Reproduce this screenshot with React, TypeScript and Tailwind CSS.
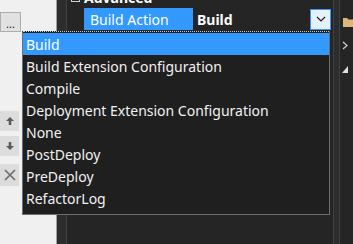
const options = [
  "Build",
  "Build Extension Configuration",
  "Compile",
  "Deployment Extension Configuration",
  "None",
  "PostDeploy",
  "PreDeploy",
  "RefactorLog",
]

function SideButton({ children, className = "" }: { children: React.ReactNode; className?: string }) {
  return (
    <div className={"w-[19px] h-[20px] bg-[#dcdcdc] flex items-center justify-center text-[#555] " + className}>
      {children}
    </div>
  )
}

export default function App() {
  return (
    <main
      className="relative w-[353px] h-[244px] overflow-hidden flex bg-[#252526] text-[14px]"
      style={{ fontFamily: '"Noto Sans", "Open Sans", sans-serif' }}
    >
      {/* left light panel */}
      <div className="w-[57px] h-full bg-[#f0f0f0] border-r border-[#a0a0a0] flex flex-col">
        <div className="mt-[12px] w-[21px] h-[20px] bg-[#e1e1e1] border border-[#adadad] flex items-end justify-center pb-[2px] text-[#222] text-[11px] leading-none">
          ...
        </div>
        <div className="mt-[79px] flex flex-col gap-[5px]">
          <SideButton>
            <svg width="10" height="10" viewBox="0 0 10 10">
              <path d="M5 1 L9 5 H6.3 V9 H3.7 V5 H1 Z" fill="#5a5a5a" />
            </svg>
          </SideButton>
          <SideButton>
            <svg width="10" height="10" viewBox="0 0 10 10">
              <path d="M5 9 L9 5 H6.3 V1 H3.7 V5 H1 Z" fill="#5a5a5a" />
            </svg>
          </SideButton>
          <SideButton className="mt-[3px] h-[22px]">
            <svg width="14" height="14" viewBox="0 0 14 14">
              <path d="M2 2 L12 12 M12 2 L2 12" stroke="#6a6a6a" strokeWidth="1.6" />
            </svg>
          </SideButton>
        </div>
      </div>

      {/* property grid */}
      <div className="flex-1 flex">
        <div className="w-[9px] bg-[#2d2d30]" />
        <div className="w-px bg-[#3f3f46]" />
        <div className="flex-1 flex flex-col -mt-[14px]">
          <div className="h-[22px] flex items-center text-white font-bold">
            <div className="w-[17px] flex justify-center">
              <span className="w-[9px] h-[9px] border border-[#d0d0d0] flex items-center justify-center">
                <span className="w-[5px] h-px bg-[#d0d0d0]" />
              </span>
            </div>
            <span>Advanced</span>
          </div>
          <div className="h-[22px] flex items-center">
            <div className="w-[17px]" />
            <div className="w-[109px] h-full bg-[#3399ff] text-white flex items-center pl-[6px]">Build Action</div>
            <div className="flex-1 h-full flex items-center pl-[4px] text-white font-bold">Build</div>
            <div className="w-[21px] h-[21px] bg-[#e5f1fb] border border-[#3399ff] flex items-center justify-center">
              <svg width="10" height="6" viewBox="0 0 10 6">
                <path d="M1 1 L5 5 L9 1" stroke="#1e1e1e" strokeWidth="1.2" fill="none" />
              </svg>
            </div>
          </div>
        </div>
        <div className="w-[2px] bg-[#252526]" />
        <div className="w-px bg-[#3f3f46]" />
      </div>

      {/* right strip */}
      <div className="w-[6px] bg-[#2d2d30] border-r border-[#3f3f46]" />
      <div className="w-[13px] flex flex-col items-start pl-[2px]">
        <svg width="14" height="12" viewBox="0 0 14 12" className="mt-[16px]">
          <path d="M1 2 H5 L6.5 3.5 H13 V11 H1 Z" fill="#dcb67a" />
        </svg>
        <svg width="6" height="9" viewBox="0 0 6 9" className="mt-[13px]">
          <path d="M1 1 L5 4.5 L1 8" stroke="#d0d0d0" strokeWidth="1.2" fill="none" />
        </svg>
        <svg width="7" height="7" viewBox="0 0 7 7" className="mt-[16px]">
          <path d="M6 0 V7 H0 Z" fill="#e0e0e0" />
        </svg>
      </div>

      {/* open dropdown list */}
      <ul className="absolute left-[22px] top-[31px] w-[308px] bg-[#1f1f20] border border-[#6e6e6e] border-t-[#1f1f20] pt-[1px] pb-[5px]">
        <li className="absolute left-0 right-0 -top-px border-t border-dotted border-[#c8c8c8]" />
        {options.map((o, i) => (
          <li
            key={o}
            className={
              "h-[22px] flex items-center pl-[3px] text-[#f1f1f1] " + (i === 0 ? "bg-[#3399ff] text-white" : "")
            }
          >
            {o}
          </li>
        ))}
      </ul>
    </main>
  )
}
